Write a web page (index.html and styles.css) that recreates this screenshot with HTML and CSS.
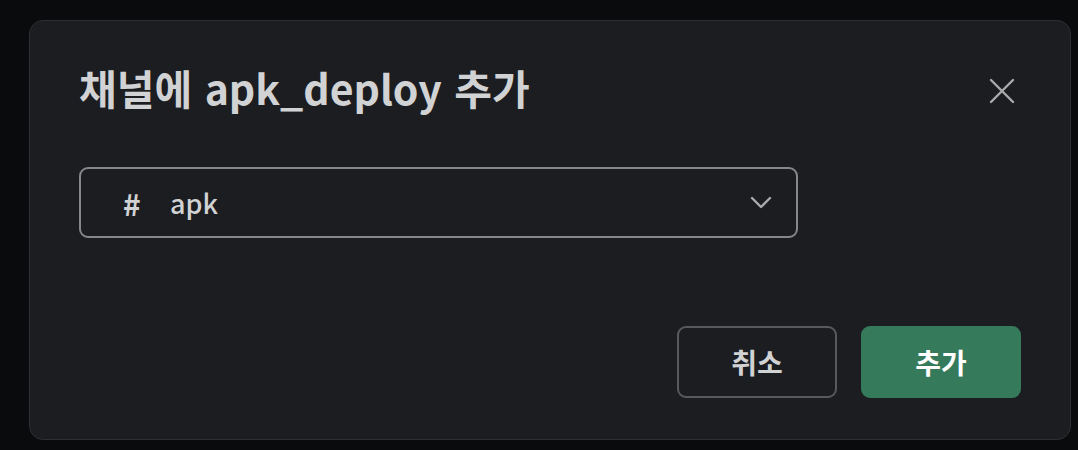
FILE: index.html
```html
<!DOCTYPE html>
<html lang="ko">
<head>
  <meta charset="UTF-8" />
  <meta name="viewport" content="width=device-width, initial-scale=1.0"/>
  <title>채널에 추가</title>
  <link rel="stylesheet" href="styles.css">
</head>
<body>
  <div class="modal">
    <div class="modal-header">
      <h1 class="title">채널에 apk_deploy 추가</h1>
      <button class="close" aria-label="닫기">
        <svg width="26" height="26" viewBox="0 0 26 26">
          <path d="M2 2 L24 24 M24 2 L2 24" stroke="#a9aaab" stroke-width="2.4" stroke-linecap="round" fill="none"/>
        </svg>
      </button>
    </div>

    <div class="select">
      <span class="hash">#</span>
      <span class="channel">apk</span>
      <svg class="chevron" width="22" height="14" viewBox="0 0 22 14">
        <path d="M2 2 L11 11 L20 2" stroke="#a9aaab" stroke-width="2.4" stroke-linecap="round" stroke-linejoin="round" fill="none"/>
      </svg>
    </div>

    <div class="actions">
      <button class="btn cancel">취소</button>
      <button class="btn primary">추가</button>
    </div>
  </div>
</body>
</html>
```

FILE: styles.css
```css
* {
  box-sizing: border-box;
}

body, html {
  margin: 0;
  padding: 0;
  height: 100%;
  width: 100%;
  background: #0a0b0d;
  font-family: "Noto Sans CJK KR", "Noto Sans", sans-serif;
}

body {
  padding: 20px 7px 10px 29px;
}

.modal {
  width: 1042px;
  height: 420px;
  background: #1c1d21;
  border: 1px solid #2e2f33;
  border-radius: 14px;
  padding: 36px 49px 41px 49px;
  display: flex;
  flex-direction: column;
}

.modal-header {
  display: flex;
  justify-content: space-between;
  align-items: flex-start;
  height: 60px;
}

.title {
  margin: 0;
  font-size: 41px;
  line-height: 60px;
  font-weight: 700;
  color: #d1d2d3;
  word-spacing: 1px;
}

.close {
  background: none;
  border: none;
  padding: 0;
  margin-right: 6px;
  margin-top: 21px;
  width: 26px;
  height: 26px;
  cursor: pointer;
}

.select {
  margin-top: 50px;
  width: 719px;
  height: 71px;
  border: 2px solid #868789;
  border-radius: 9px;
  display: flex;
  align-items: center;
  padding-left: 42px;
  padding-right: 24px;
  color: #d1d2d3;
  font-size: 27px;
}

.hash {
  font-weight: 700;
  font-size: 30px;
  width: 47px;
}

.channel {
  flex: 1;
  font-weight: 500;
}

.actions {
  margin-top: auto;
  display: flex;
  justify-content: flex-end;
  gap: 24px;
}

.btn {
  width: 160px;
  height: 72px;
  border-radius: 9px;
  font-family: inherit;
  font-size: 28px;
  font-weight: 700;
  cursor: pointer;
}

.cancel {
  background: transparent;
  border: 2px solid #58595c;
  color: #d1d2d3;
}

.primary {
  background: #357a5a;
  border: none;
  color: #ffffff;
}
```
